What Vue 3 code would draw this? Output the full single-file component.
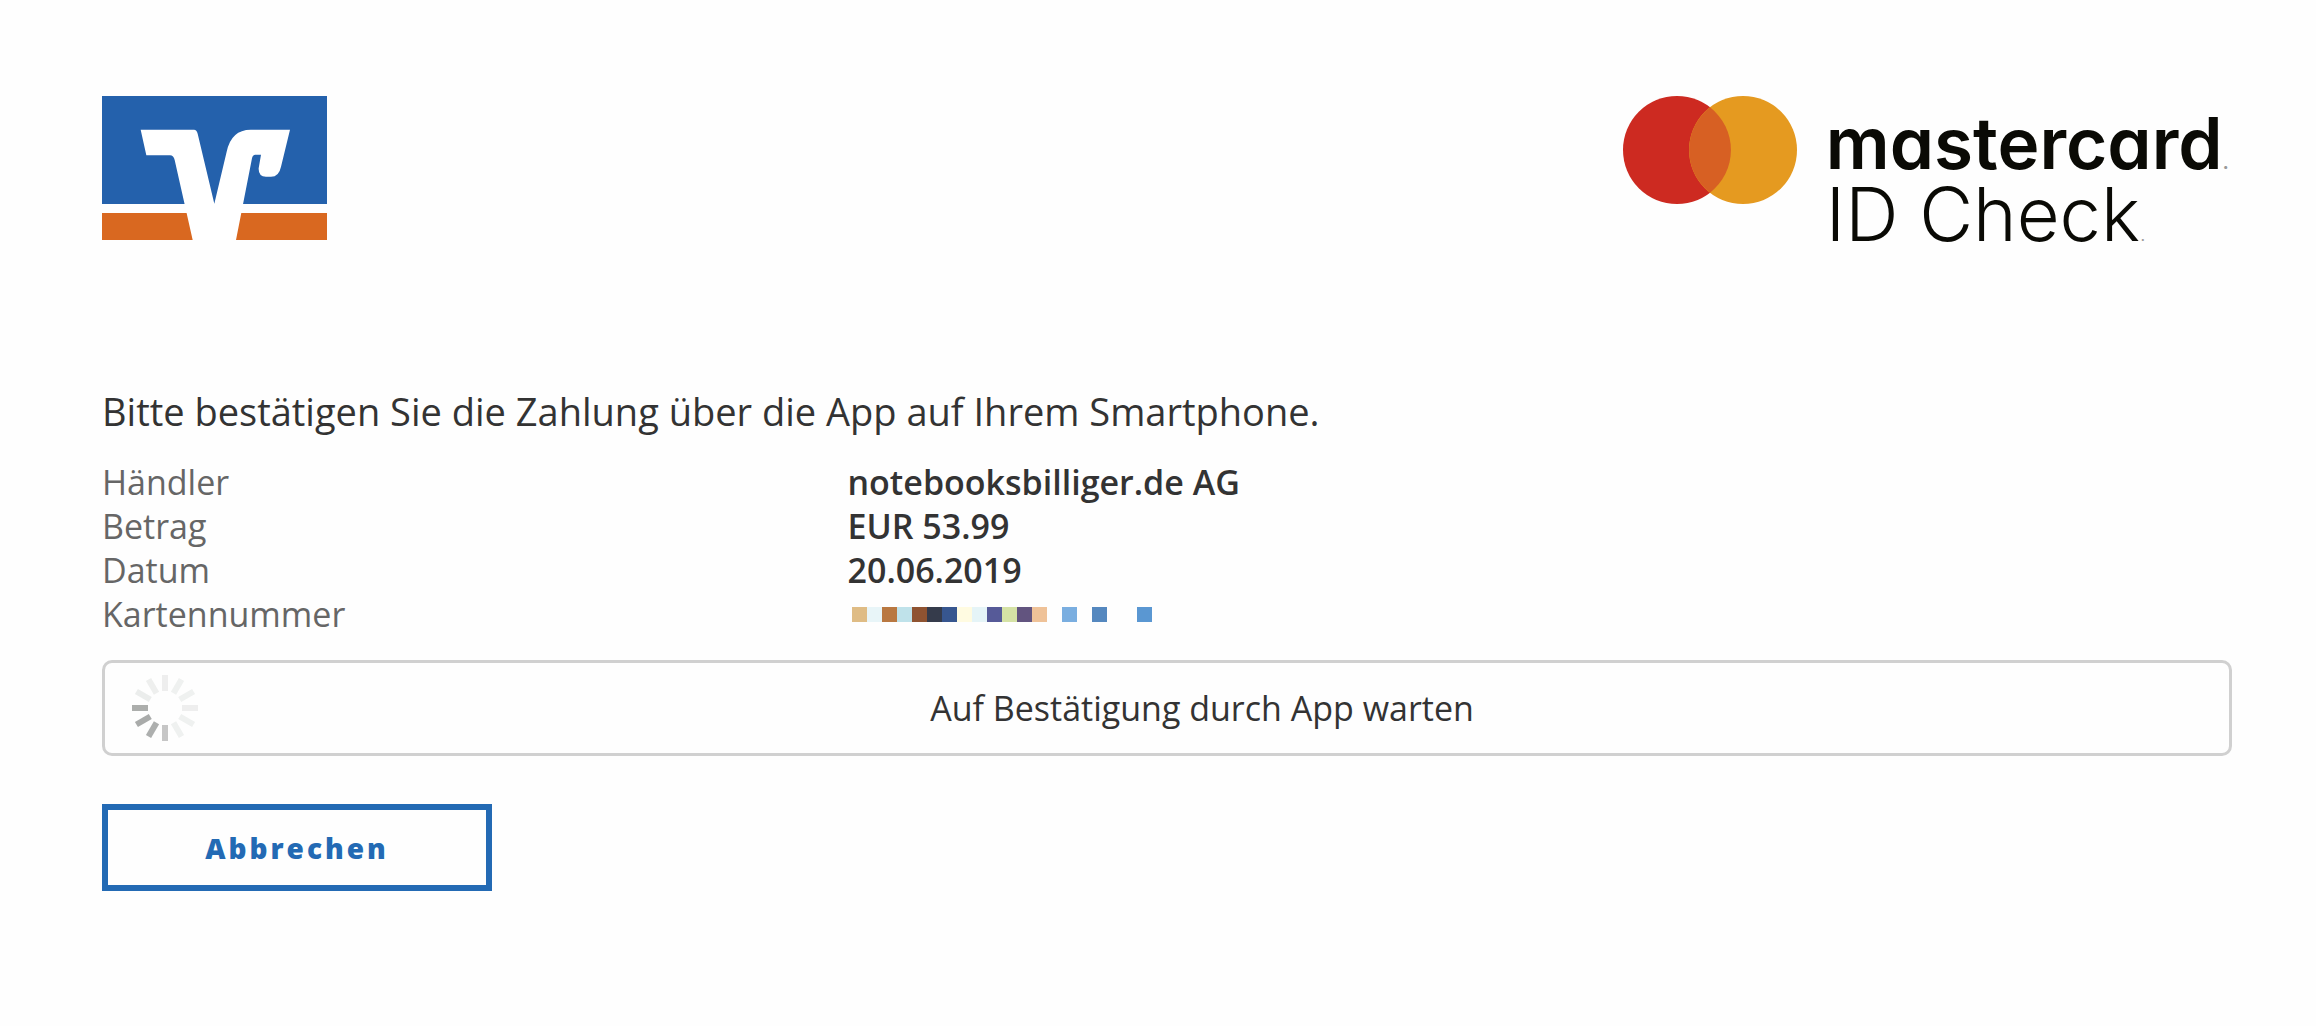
<script setup>
const details = [
  { label: 'Händler', value: 'notebooksbilliger.de AG' },
  { label: 'Betrag', value: 'EUR 53.99' },
  { label: 'Datum', value: '20.06.2019' },
]

// Mosaic cells hiding the card number; null leaves the cell empty.
const mosaic = [
  '#dfbc85', '#e8f5f8', '#b97841', '#bfe2ea', '#8f5331', '#353b4b', '#37568f',
  '#fffbe1', '#e5f4f7', '#565a98', '#d5e2a5', '#62547f', '#efc298', null,
  '#7aaee0', null, '#5588bf', null, null, '#5a97d2',
]

// Spinner spokes, clockwise from twelve o'clock.
const spokes = [
  '#eeeeee', '#eff1f0', '#eff1f0', '#eeeeee', '#eff1f0', '#eff1f0',
  '#c6c6c6', '#adafae', '#a9abaa', '#acaeac', '#ebedec', '#eeefee',
]
</script>

<template>
  <main class="page">
    <header class="header">
      <svg class="bank-logo" viewBox="36 33 675 432" role="img" aria-label="Volksbank Raiffeisenbank">
        <rect x="36" y="33" width="675" height="324" fill="#2461ac" />
        <rect x="36" y="384" width="675" height="81" fill="#d96820" />
        <path
          fill="#fff"
          d="M152 134H312Q320 134 323 146L373 356L410 200Q424 134 482 134H600L573 245Q567 275 543 275H528Q505 275 506 250L513 209H496Q488 209 486 220L438 465H308L254 225Q251 211 240 211H169Z"
        />
      </svg>
      <div class="scheme">
        <svg class="circles" viewBox="0 0 174 108" aria-hidden="true">
          <circle cx="54" cy="54" r="54" fill="#cd2a21" />
          <circle cx="120" cy="54" r="54" fill="#e59a20" />
          <path d="M87 11.300A54 54 0 0 1 87 96.700A54 54 0 0 1 87 11.300Z" fill="#d76023" />
        </svg>
        <div class="scheme-text">
          <div class="brand">mastercard<span class="dot">.</span></div>
          <div class="product">ID Check<span class="dot">.</span></div>
        </div>
      </div>
    </header>

    <h1 class="title">Bitte bestätigen Sie die Zahlung über die App auf Ihrem Smartphone.</h1>

    <table class="details">
      <tbody>
        <tr v-for="row in details" :key="row.label">
          <th scope="row">{{ row.label }}</th>
          <td>{{ row.value }}</td>
        </tr>
        <tr>
          <th scope="row">Kartennummer</th>
          <td>
            <div class="mosaic">
              <span v-for="(color, i) in mosaic" :key="i" :style="{ background: color }"></span>
            </div>
          </td>
        </tr>
      </tbody>
    </table>

    <div class="status" role="status">
      <svg class="spinner" viewBox="-35 -35 70 70" aria-hidden="true">
        <line
          v-for="(color, i) in spokes"
          :key="i"
          x1="0" y1="-33" x2="0" y2="-17"
          stroke-width="6"
          :stroke="color"
          :transform="`rotate(${i * 30})`"
        />
      </svg>
      <span class="status-text">Auf Bestätigung durch App warten</span>
    </div>

    <button class="cancel" type="button">Abbrechen</button>
  </main>
</template>

<style>
body {
  margin: 0;
  background: #fefefe;
}
</style>

<style scoped>
.page {
  padding: 96px 84px 96px 102px;
  font-family: "Open Sans", "Noto Sans", sans-serif;
  color: #333;
}

.header {
  display: flex;
  justify-content: space-between;
  align-items: flex-start;
}

.bank-logo {
  display: block;
  width: 225px;
  height: 144px;
}

.scheme {
  display: flex;
  gap: 29px;
  padding-right: 3px;
}

.circles {
  width: 174px;
  height: 108px;
}

.scheme-text {
  padding-top: 12px;
  font-family: Inter, Lato, sans-serif;
  font-feature-settings: "cv11";
  color: #0a0a05;
  white-space: nowrap;
}

.brand {
  font-size: 71px;
  font-weight: 600;
  line-height: 70px;
}

.product {
  font-size: 74px;
  font-weight: 300;
  line-height: 72px;
}

.dot {
  font-size: 20px;
  line-height: 0;
  color: #999;
}

.title {
  margin: 135px 0 23px;
  font-size: 38px;
  font-weight: 400;
  line-height: 52px;
}

.details {
  width: 100%;
  border-collapse: collapse;
  table-layout: fixed;
  font-size: 34px;
  line-height: 44px;
}

.details th {
  width: 35%;
  padding: 0;
  font-weight: 400;
  text-align: left;
  color: #666;
}

.details td {
  padding: 0;
  font-weight: 600;
}

.mosaic {
  display: flex;
  padding-left: 4px;
}

.mosaic span {
  width: 15px;
  height: 15px;
}

.status {
  display: flex;
  align-items: center;
  box-sizing: border-box;
  min-height: 96px;
  margin: 24px 0 48px;
  padding: 0 25px;
  border: 3px solid #d0d0d0;
  border-radius: 10px;
  font-size: 34px;
  line-height: 44px;
}

.spinner {
  width: 70px;
  height: 70px;
}

.status-text {
  flex: 1;
  text-align: center;
}

.cancel {
  display: block;
  min-width: 390px;
  min-height: 87px;
  border: 6px solid #236ab4;
  background: transparent;
  font-family: "Open Sans", "Noto Sans", sans-serif;
  font-size: 28px;
  font-weight: 800;
  letter-spacing: 3px;
  color: #236ab4;
}
</style>
